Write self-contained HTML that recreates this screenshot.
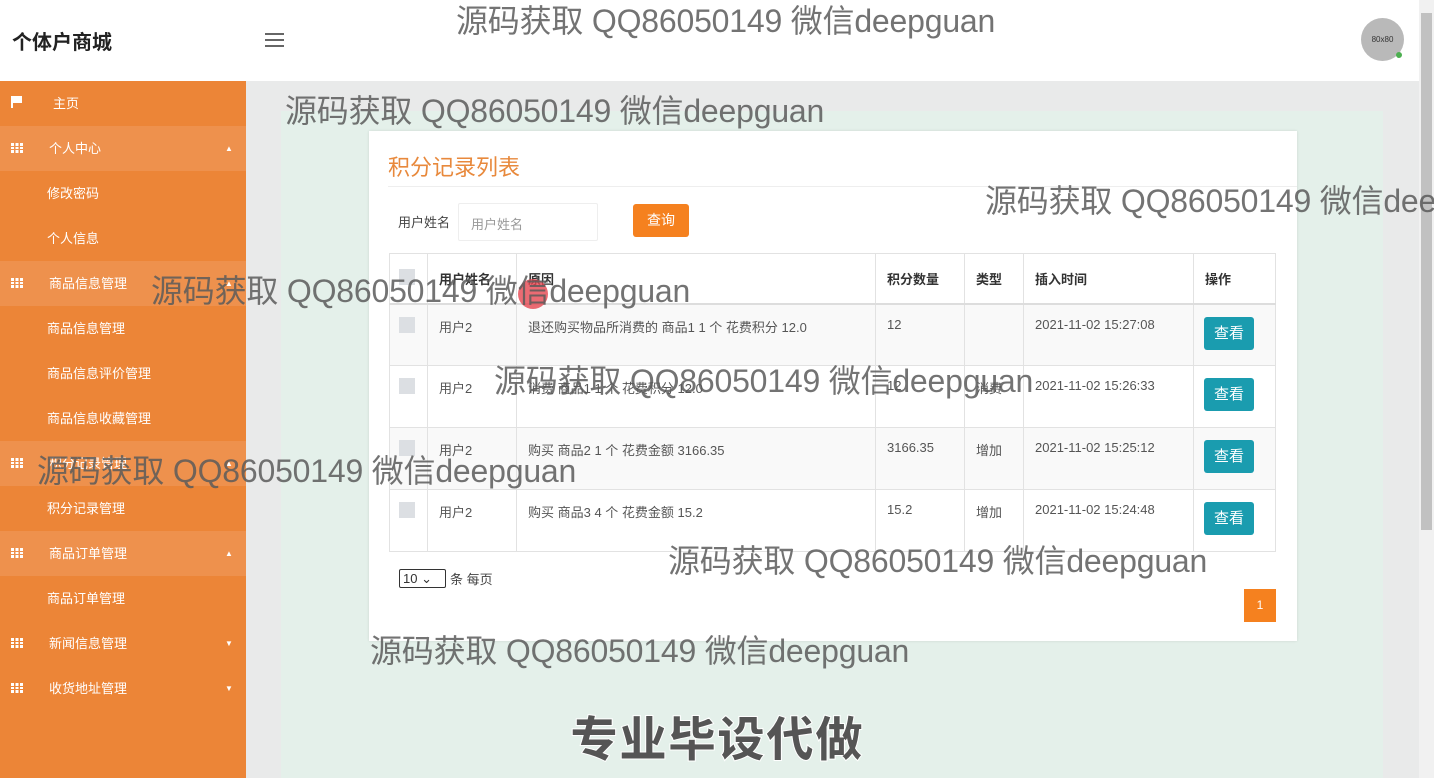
<!DOCTYPE html>
<html><head><meta charset="utf-8">
<style>
*{margin:0;padding:0;box-sizing:border-box}
body{width:1434px;height:778px;overflow:hidden;position:relative;background:#e9eaea;font-family:"Liberation Sans","Noto Sans CJK SC",sans-serif;font-size:13px;color:#333}
.top{position:absolute;left:0;top:0;width:1419px;height:81px;background:#fff}
.logo{position:absolute;left:12px;top:26px;font-size:20px;font-weight:bold;color:#222}
.ham{position:absolute;left:265px;top:33px;width:19px}
.ham i{display:block;height:2px;background:#666;margin-bottom:4px}
.avatar{position:absolute;left:1361px;top:18px;width:43px;height:43px;border-radius:50%;background:#b9b9b9;font-size:8px;line-height:43px;text-align:center;color:#333}
.dot{position:absolute;left:1396px;top:52px;width:6px;height:6px;border-radius:50%;background:#4caf50}
.side{position:absolute;left:0;top:81px;width:246px;height:697px;background:#ec8537}
.it{height:45px;line-height:45px;color:#fff;font-size:13px;position:relative}
.it.h{background:#ee914d}
.it .t{position:absolute;left:49px}
.it.s .t{left:47px}
.car{position:absolute;left:225px;top:0;font-size:8px}
.g{position:absolute;left:11px;top:17px;width:12px;height:10px;background:
linear-gradient(90deg,#fff 3px,transparent 3px,transparent 4.5px,#fff 4.5px,#fff 7.5px,transparent 7.5px,transparent 9px,#fff 9px);}
.g:after{content:"";position:absolute;left:0;right:0;top:3px;height:1px;background:#ec8537;box-shadow:0 3px 0 #ec8537}
.it.h .g:after{background:#ee914d;box-shadow:0 3px 0 #ee914d}
.flag{position:absolute;left:11px;top:15px;width:11px;height:12px;border-left:2px solid #fff}
.flag:after{content:"";position:absolute;left:0;top:0;width:9px;height:7px;background:#fff}
.sb{position:absolute;left:1419px;top:0;width:15px;height:778px;background:#f1f1f1}
.sb div{position:absolute;left:2px;top:13px;width:11px;height:517px;background:#c1c1c1}
.green{position:absolute;left:281px;top:111px;width:1102px;height:667px;background:#e4f0ea}
.card{position:absolute;left:369px;top:131px;width:928px;height:510px;background:#fff;box-shadow:0 0 3px rgba(0,0,0,.1)}
.title{position:absolute;left:19px;top:19px;font-size:22px;color:#e8893c}
.hr{position:absolute;left:19px;right:0;top:55px;height:1px;background:#eee}
.lbl{position:absolute;left:29px;top:81px;font-size:13px;color:#444}
.inp{position:absolute;left:89px;top:72px;width:140px;height:38px;border:1px solid #eee;border-radius:2px;color:#999;padding:10px 12px;font-size:13px}
.btn{position:absolute;left:264px;top:73px;width:56px;height:33px;background:#f5811f;border-radius:3px;color:#fff;text-align:center;line-height:32px;font-size:14px}
table{position:absolute;left:20px;top:122px;width:887px;border-collapse:collapse;table-layout:fixed}
td,th{border:1px solid #e2e2e2;text-align:left;vertical-align:top;font-size:13px;color:#555;font-weight:normal;padding:0 11px}
th{height:50px;vertical-align:middle;color:#333;font-weight:bold;border-bottom:2px solid #ddd}
td{height:62px;padding-top:12px}
tr.o td{background:#f9f9f9}
.cb{display:inline-block;width:16px;height:16px;background:#dcdfe3;margin-left:-2px}
.v{display:inline-block;width:50px;height:33px;background:#1a9caf;color:#fff;border-radius:3px;text-align:center;line-height:33px;font-size:15px;margin-left:-1px}
.sel{position:absolute;left:30px;top:438px;width:47px;height:19px;border:1px solid #333;font-size:13px;padding-left:3px;line-height:17px;border-radius:2px}
.per{position:absolute;left:81px;top:438px;font-size:13px;color:#444}
.pg{position:absolute;left:875px;top:458px;width:32px;height:33px;background:#f5811f;color:#fff;text-align:center;line-height:33px;font-size:12px}
.wm{position:absolute;font-size:32px;color:rgba(90,90,90,.85);white-space:nowrap;font-family:"Liberation Sans","Noto Sans CJK SC",sans-serif;letter-spacing:-.2px;line-height:40px}
.big{position:absolute;left:570px;top:700px;font-size:48px;font-weight:900;color:#555;-webkit-text-stroke:1px #fff;letter-spacing:1px}
.cur{position:absolute;left:518px;top:279px;width:30px;height:30px;border-radius:50%;background:rgba(230,70,80,.8)}
</style></head><body>
<div class="top"><div class="logo">个体户商城</div><div class="ham"><i></i><i></i><i></i></div><div class="avatar">80x80</div><div class="dot"></div></div>
<div class="side">
<div class="it"><span class="flag"></span><span class="t" style="left:53px">主页</span></div>
<div class="it h"><span class="g"></span><span class="t">个人中心</span><span class="car">▲</span></div>
<div class="it s"><span class="t">修改密码</span></div>
<div class="it s"><span class="t">个人信息</span></div>
<div class="it h"><span class="g"></span><span class="t">商品信息管理</span><span class="car">▲</span></div>
<div class="it s"><span class="t">商品信息管理</span></div>
<div class="it s"><span class="t">商品信息评价管理</span></div>
<div class="it s"><span class="t">商品信息收藏管理</span></div>
<div class="it h"><span class="g"></span><span class="t">积分记录管理</span><span class="car">▲</span></div>
<div class="it s"><span class="t">积分记录管理</span></div>
<div class="it h"><span class="g"></span><span class="t">商品订单管理</span><span class="car">▲</span></div>
<div class="it s"><span class="t">商品订单管理</span></div>
<div class="it"><span class="g"></span><span class="t">新闻信息管理</span><span class="car">▼</span></div>
<div class="it"><span class="g"></span><span class="t">收货地址管理</span><span class="car">▼</span></div>
</div>
<div class="sb"><div></div></div>
<div class="green"></div>
<div class="card">
<div class="title">积分记录列表</div><div class="hr"></div>
<div class="lbl">用户姓名</div><div class="inp">用户姓名</div><div class="btn">查询</div>
<table>
<colgroup><col style="width:38px"><col style="width:89px"><col style="width:359px"><col style="width:89px"><col style="width:59px"><col style="width:170px"><col></colgroup>
<tr><th><span class="cb"></span></th><th>用户姓名</th><th>原因</th><th>积分数量</th><th>类型</th><th>插入时间</th><th>操作</th></tr>
<tr class="o"><td><span class="cb"></span></td><td>用户2</td><td>退还购买物品所消费的 商品1 1 个 花费积分 12.0</td><td>12</td><td></td><td>2021-11-02 15:27:08</td><td><span class="v">查看</span></td></tr>
<tr><td><span class="cb"></span></td><td>用户2</td><td>消费 商品1 1 个 花费积分 12.0</td><td>12</td><td>消费</td><td>2021-11-02 15:26:33</td><td><span class="v">查看</span></td></tr>
<tr class="o"><td><span class="cb"></span></td><td>用户2</td><td>购买 商品2 1 个 花费金额 3166.35</td><td>3166.35</td><td>增加</td><td>2021-11-02 15:25:12</td><td><span class="v">查看</span></td></tr>
<tr><td><span class="cb"></span></td><td>用户2</td><td>购买 商品3 4 个 花费金额 15.2</td><td>15.2</td><td>增加</td><td>2021-11-02 15:24:48</td><td><span class="v">查看</span></td></tr>
</table>
<div class="sel">10 ⌄</div><div class="per">条 每页</div>
<div class="pg">1</div>
</div>
<div class="cur"></div>
<div class="wm" style="left:456px;top:1px">源码获取 QQ86050149 微信deepguan</div>
<div class="wm" style="left:285px;top:91px">源码获取 QQ86050149 微信deepguan</div>
<div class="wm" style="left:985px;top:181px">源码获取 QQ86050149 微信deepguan</div>
<div class="wm" style="left:151px;top:271px">源码获取 QQ86050149 微信deepguan</div>
<div class="wm" style="left:494px;top:361px">源码获取 QQ86050149 微信deepguan</div>
<div class="wm" style="left:37px;top:451px">源码获取 QQ86050149 微信deepguan</div>
<div class="wm" style="left:668px;top:541px">源码获取 QQ86050149 微信deepguan</div>
<div class="wm" style="left:370px;top:631px">源码获取 QQ86050149 微信deepguan</div>
<div class="big">专业毕设代做</div>
</body></html>
